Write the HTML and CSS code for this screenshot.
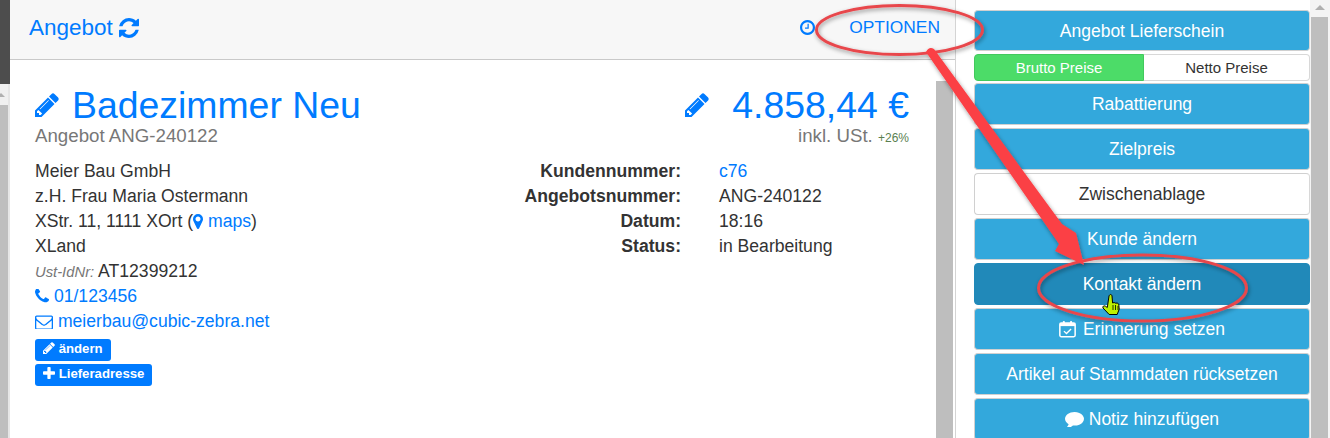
FILE: index.html
```html
<!DOCTYPE html>
<html lang="de">
<head>
<meta charset="utf-8">
<title>Angebot</title>
<link rel="stylesheet" href="styles.css">
</head>
<body>
<svg width="0" height="0" class="defs">
  <symbol id="i-pencil" viewBox="128 128 1536 1536"><path d="M491 1536l91-91-235-235-91 91v107h128v128h107zm523-928q0-22-22-22-10 0-17 7l-542 542q-7 7-7 17 0 22 22 22 10 0 17-7l542-542q7-7 7-17zm-54-192l416 416-832 832h-416v-416zm683 96q0 53-37 90l-166 166-416-416 166-165q36-38 90-38 53 0 91 38l235 234q37 39 37 91z"/></symbol>
  <symbol id="i-refresh" viewBox="128 128 1536 1536"><path d="M1639 1056q0 5-1 7-64 268-268 434.5t-478 166.5q-146 0-282.5-55t-243.5-157l-129 129q-19 19-45 19t-45-19-19-45v-448q0-26 19-45t45-19h448q26 0 45 19t19 45-19 45l-137 137q71 66 161 102t187 36q134 0 250-65t186-179q11-17 53-117 8-23 30-23h192q13 0 22.5 9.5t9.5 22.5zm25-800v448q0 26-19 45t-45 19h-448q-26 0-45-19t-19-45 19-45l138-138q-148-137-349-137-134 0-250 65t-186 179q-11 17-53 117-8 23-30 23h-199q-13 0-22.5-9.5t-9.5-22.5v-7q65-268 270-434.5t480-166.5q146 0 284 55.5t245 156.5l130-129q19-19 45-19t45 19 19 45z"/></symbol>
  <symbol id="i-clock" viewBox="128 128 1536 1536"><path d="M1024 544v448q0 14-9 23t-23 9h-320q-14 0-23-9t-9-23v-64q0-14 9-23t23-9h224v-352q0-14 9-23t23-9h64q14 0 23 9t9 23zm416 352q0-148-73-273t-198-198-273-73-273 73-198 198-73 273 73 273 198 198 273 73 273-73 198-198 73-273zm224 0q0 209-103 385.5t-279.5 279.5-385.5 103-385.5-103-279.5-279.5-103-385.5 103-385.5 279.5-279.5 385.5-103 385.5 103 279.5 279.5 103 385.5z"/></symbol>
  <symbol id="i-marker" viewBox="384 128 1024 1536"><path d="M1152 640q0-106-75-181t-181-75-181 75-75 181 75 181 181 75 181-75 75-181zm256 0q0 109-33 179l-364 774q-16 33-47.5 52t-67.5 19-67.5-19-46.5-52l-365-774q-33-70-33-179 0-212 150-362t362-150 362 150 150 362z"/></symbol>
  <symbol id="i-phone" viewBox="192 192 1408 1408"><path d="M1600 1240q0 27-10 70.5t-21 68.5q-21 50-122 106-94 51-186 51-27 0-53-3.5t-57.5-12.5-47-14.5-55.5-20.5-49-18q-98-35-175-83-127-79-264-216t-216-264q-48-77-83-175-3-9-18-49t-20.5-55.5-14.5-47-12.5-57.5-3.5-53q0-92 51-186 56-101 106-122 25-11 68.5-21t70.5-10q14 0 21 3 18 6 53 76 11 19 30 54t35 63.5 31 53.5q3 4 17.5 25t21.5 35.5 7 28.5q0 20-28.5 50t-62 55-62 53-28.5 46q0 9 5 22.5t8.5 20.5 14 24 11.5 19q76 137 174 235t235 174q2 1 19 11.5t24 14 20.5 8.5 22.5 5q18 0 46-28.5t53-62 55-62 50-28.5q14 0 28.5 7t35.5 21.5 25 17.5q25 15 53.5 31t63.5 35 54 30q70 35 76 53 3 7 3 21z"/></symbol>
  <symbol id="i-envelope" viewBox="0 256 1792 1280"><path d="M1664 1504v-768q-32 36-69 66-268 206-426 338-51 43-83 67t-86.5 48.5-102.5 24.5h-2q-48 0-102.5-24.5t-86.5-48.5-83-67q-158-132-426-338-37-30-69-66v768q0 13 9.5 22.5t22.5 9.5h1472q13 0 22.5-9.5t9.5-22.5zm0-1051v-24.5l-.5-13-3-12.5-5.5-9-9-7.5-14-2.5h-1472q-13 0-22.5 9.5t-9.5 22.5q0 168 147 284 193 152 401 317 6 5 35 29.5t46 37.5 44.5 31.5 50.5 27.5 43 9h2q20 0 43-9t50.5-27.5 44.5-31.5 46-37.5 35-29.5q208-165 401-317 54-43 100.5-115.5t46.5-131.5zm128-37v1088q0 66-47 113t-113 47h-1472q-66 0-113-47t-47-113v-1088q0-66 47-113t113-47h1472q66 0 113 47t47 113z"/></symbol>
  <symbol id="i-plus" viewBox="192 192 1408 1408"><path d="M1600 736v192q0 40-28 68t-68 28h-416v416q0 40-28 68t-68 28h-192q-40 0-68-28t-28-68v-416h-416q-40 0-68-28t-28-68v-192q0-40 28-68t68-28h416v-416q0-40 28-68t68-28h192q40 0 68 28t28 68v416h416q40 0 68 28t28 68z" transform="translate(0 64)"/></symbol>
  <symbol id="i-comment" viewBox="0 256 1792 1408"><path d="M1792 896q0 174-120 321.5t-326 233-450 85.5q-70 0-145-8-198 175-460 242-49 14-114 22-17 2-30.5-9t-17.5-29v-1q-3-4-.5-12t2-10 4.5-9.5l6-9 7-8.5 8-9q7-8 31-34.5t34.5-38 31-39.5 32.5-51 27-59 26-76q-157-89-247.5-220t-90.5-281q0-130 71-248.5t191-204.5 286-136.5 348-50.5q244 0 450 85.5t326 233 120 321.5z"/></symbol>
</svg>

<div class="screen">
  <div class="edge">
    <div class="edge-dark"></div>
    <div class="edge-arrow"></div>
    <div class="edge-thumb"></div>
  </div>

  <section class="offer">
    <header class="offer-head">
      <div class="offer-title">Angebot <svg class="ic ic-refresh"><use href="#i-refresh"/></svg></div>
      <div class="offer-tools">
        <svg class="ic ic-clock"><use href="#i-clock"/></svg>
        <a class="options">OPTIONEN</a>
      </div>
    </header>
    <div class="offer-body">
      <div class="offer-content">
        <div class="title-row">
          <div>
            <h1 class="name"><svg class="ic ic-pen-lg"><use href="#i-pencil"/></svg>Badezimmer Neu</h1>
            <div class="subname">Angebot ANG-240122</div>
          </div>
          <div class="price-box">
            <div class="price"><svg class="ic ic-pen-lg ic-pen-price"><use href="#i-pencil"/></svg>4.858,44 €</div>
            <div class="tax">inkl. USt. <small class="tax-rate">+26%</small></div>
          </div>
        </div>
        <div class="details">
          <div class="address">
            <div class="line">Meier Bau GmbH</div>
            <div class="line">z.H. Frau Maria Ostermann</div>
            <div class="line">XStr. 11, 1111 XOrt (<a class="link"><svg class="ic ic-marker"><use href="#i-marker"/></svg> maps</a>)</div>
            <div class="line">XLand</div>
            <div class="line"><em class="vat">Ust-IdNr:</em> AT12399212</div>
            <div class="line"><a class="link"><svg class="ic ic-phone"><use href="#i-phone"/></svg> 01/123456</a></div>
            <div class="line"><a class="link"><svg class="ic ic-env"><use href="#i-envelope"/></svg> meierbau@cubic-zebra.net</a></div>
            <div class="badges">
              <div><span class="badge"><svg class="ic ic-b-pen"><use href="#i-pencil"/></svg> ändern</span></div>
              <div><span class="badge"><svg class="ic ic-b-plus"><use href="#i-plus"/></svg> Lieferadresse</span></div>
            </div>
          </div>
          <dl class="meta">
            <dt>Kundennummer:</dt><dd><a class="link">c76</a></dd>
            <dt>Angebotsnummer:</dt><dd>ANG-240122</dd>
            <dt>Datum:</dt><dd>18:16</dd>
            <dt>Status:</dt><dd>in Bearbeitung</dd>
          </dl>
        </div>
      </div>
      <div class="inner-scroll"><div class="inner-thumb"></div></div>
    </div>
  </section>

  <aside class="actions">
    <button class="btn btn-first">Angebot Lieferschein</button>
    <div class="toggle">
      <span class="toggle-on">Brutto Preise</span>
      <span class="toggle-off">Netto Preise</span>
    </div>
    <button class="btn">Rabattierung</button>
    <button class="btn">Zielpreis</button>
    <button class="btn btn-white">Zwischenablage</button>
    <button class="btn">Kunde ändern</button>
    <button class="btn btn-active">Kontakt ändern</button>
    <button class="btn">
      <svg class="ic-cal" viewBox="0 0 20 20"><rect x="1" y="3" width="18" height="16" rx="1.6" fill="none" stroke="currentColor" stroke-width="1.8"/><rect x="1" y="3" width="18" height="3.6" fill="currentColor"/><rect x="4.500" y="0.500" width="2.400" height="4" rx="1" fill="currentColor"/><rect x="13" y="0.500" width="2.400" height="4" rx="1" fill="currentColor"/><path d="M5.800 12.500l3 2.800 5.400-5.400" fill="none" stroke="currentColor" stroke-width="1.600"/></svg>
      Erinnerung setzen</button>
    <button class="btn">Artikel auf Stammdaten rücksetzen</button>
    <button class="btn"><svg class="ic ic-comment"><use href="#i-comment"/></svg> Notiz hinzufügen</button>
  </aside>

  <div class="page-scroll">
    <div class="page-arrow"></div>
    <div class="page-thumb"></div>
  </div>

  <svg class="markup" viewBox="0 0 1330 438">
    <defs>
      <filter id="soft" x="-10%" y="-10%" width="120%" height="120%">
        <feDropShadow dx="1" dy="2" stdDeviation="2" flood-color="#000" flood-opacity=".4"/>
      </filter>
    </defs>
    <g filter="url(#soft)">
      <ellipse cx="899.500" cy="30" rx="83" ry="24.500" fill="none" stroke="#e8474c" stroke-width="3"/>
      <ellipse cx="1142.500" cy="288" rx="104" ry="33" fill="none" stroke="#e8474c" stroke-width="3"/>
      <path d="M926 52 Q929 46 934 49 L1062 224 L1076 233 L1084 265 L1055 251 L1059 244 Z" fill="#fb4045"/>
    </g>
    <path d="M1109 296c.8-2 2.600-2 3 0l.6 7 1.600-.5 1.500.7 1.500-.2 1.600 1.200.400 5-2 5.300h-8l-6.200-6.500c-.8-1.600 1-2.800 2.500-1.800l1.800 1.300z" fill="#bdf000" stroke="#000" stroke-width="1"/>
    <path d="M1113 305v5M1115.500 305v5M1118 306v4" stroke="#000" stroke-width=".8" fill="none"/>
  </svg>
</div>
</body>
</html>
```
FILE: styles.css
```css
* { box-sizing: border-box; }
html, body { margin: 0; padding: 0; }
body { font-family: "Liberation Sans", Arial, sans-serif; font-size: 17.6px; color: #333; background: #fff; }
.defs { position: absolute; }
.screen { position: relative; display: flex; width: 1330px; height: 438px; overflow: hidden; background: #fff; }
.ic { display: inline-block; fill: currentColor; vertical-align: baseline; }
a { text-decoration: none; }
.link { color: #007bff; }

/* left window edge */
.edge { flex: 0 0 10px; display: flex; flex-direction: column; background: #bebebe; border-right: 2px solid #e6e6e6; }
.edge-dark { height: 84px; background: #4d4d4d; margin-right: -2px; }
.edge-arrow { height: 21px; background: #f0f0f0; position: relative; }
.edge-arrow::after { content: ""; position: absolute; left: -3px; top: 9px; border: 4px solid transparent; border-top: 0; border-bottom-color: #b0b0b0; }
.edge-thumb { flex: 1; background: #bebebe; }

/* offer panel */
.offer { flex: 0 0 946px; display: flex; flex-direction: column; border-right: 1px solid #d4d4d4; }
.offer-head { height: 60px; flex: none; display: flex; justify-content: space-between; align-items: center; padding: 0 15px 4px 19px; background: #f7f7f7; border-bottom: 1px solid #c9c9c9; color: #007bff; }
.offer-title { font-size: 22.500px; display: flex; align-items: center; gap: 6px; }
.ic-refresh { width: 20px; height: 20px; }
.offer-tools { display: flex; align-items: center; gap: 34px; }
.ic-clock { width: 15px; height: 15px; }
.options { font-size: 17.400px; color: #007bff; }

.offer-body { flex: 1; display: flex; min-height: 0; }
.offer-content { flex: 0 0 926px; padding: 24px 27px 0 25px; }
.inner-scroll { flex: 0 0 17px; padding-top: 21px; }
.inner-thumb { height: 100%; background: #bebebe; }

.title-row { display: flex; justify-content: space-between; align-items: flex-start; }
.name { margin: 0; font-size: 37.400px; font-weight: 400; line-height: 42px; color: #007bff; display: flex; align-items: center; }
.ic-pen-lg { width: 24px; height: 24px; margin-right: 13px; }
.subname { font-size: 18.700px; line-height: 20px; color: #777; }
.price-box { text-align: right; }
.price { font-size: 37.400px; line-height: 42px; color: #007bff; display: flex; align-items: center; justify-content: flex-end; }
.ic-pen-price { margin-right: 23px; }
.tax { font-size: 18.700px; line-height: 20px; color: #777; }
.tax-rate { font-size: 12px; color: #5a7f50; }

.details { display: flex; justify-content: space-between; margin-top: 11px; line-height: 25px; }
.address { flex: 0 0 auto; }
.line { height: 25px; white-space: nowrap; }
.vat { font-size: 14.800px; color: #777; }
.ic-marker { width: 10px; height: 15px; vertical-align: -2px; }
.ic-phone { width: 14px; height: 14px; vertical-align: -1px; }
.ic-env { width: 18px; height: 14px; vertical-align: -2px; }

.badges { margin-top: 5px; display: flex; flex-direction: column; gap: 3px; }
.badges > div { height: 22px; line-height: 22px; }
.badge { display: inline-block; height: 22px; line-height: 19px; padding: 0 8px; border-radius: 3px; background: #007bff; color: #fff; font-size: 13.200px; font-weight: 700; white-space: nowrap; vertical-align: top; }
.ic-b-pen { width: 12px; height: 12px; vertical-align: -1px; }
.ic-b-plus { width: 12px; height: 12px; vertical-align: -1px; }

.meta { margin: 0 37px 0 0; display: grid; grid-template-columns: auto 153px; column-gap: 38px; align-content: start; }
.meta dt { font-weight: 700; text-align: right; }
.meta dd { margin: 0; }

/* action column */
.actions { flex: 0 0 354px; padding: 10px 0 0 18px; display: flex; flex-direction: column; gap: 3px; }
.btn { flex: none; height: 42px; width: 100%; border: 1px solid #d0d0d0; border-right-color: #d8d8d8; border-radius: 4px; background: #33a8dc; color: #fff; font: 17.500px "Liberation Sans", Arial, sans-serif; padding: 0; }
.btn-first { height: 41px; padding-top: 1px; }
.btn-white { background: #fff; color: #333; }
.btn-active { background: #2189b9; border-color: #2189b9; }
.ic-cal { width: 17px; height: 18px; vertical-align: -3px; margin-right: 2px; }
.ic-comment { width: 19px; height: 15px; vertical-align: -2px; }
.toggle { flex: none; height: 27px; margin-bottom: -1px; display: flex; font-size: 15px; line-height: 25px; text-align: center; }
.toggle-on { flex: 0 0 170px; background: #4cdc68; color: #fff; border: 1px solid #42c95d; border-radius: 4px 0 0 4px; }
.toggle-off { flex: 1; background: #fff; color: #333; border: 1px solid #d8d8d8; border-left: 0; border-radius: 0 4px 4px 0; }

/* window scrollbar */
.page-scroll { flex: 0 0 20px; display: flex; flex-direction: column; background: #f4f4f4; }
.page-arrow { height: 17px; position: relative; }
.page-arrow::after { content: ""; position: absolute; left: 5px; top: 5px; border: 5px solid transparent; border-top: 0; border-bottom-color: #b0b0b0; }
.page-thumb { flex: 1; background: #bebebe; margin: 0 2px 0 1px; }

/* hand-drawn annotation on top of the screenshot */
.markup { position: absolute; inset: 0; width: 1330px; height: 438px; pointer-events: none; }
```
